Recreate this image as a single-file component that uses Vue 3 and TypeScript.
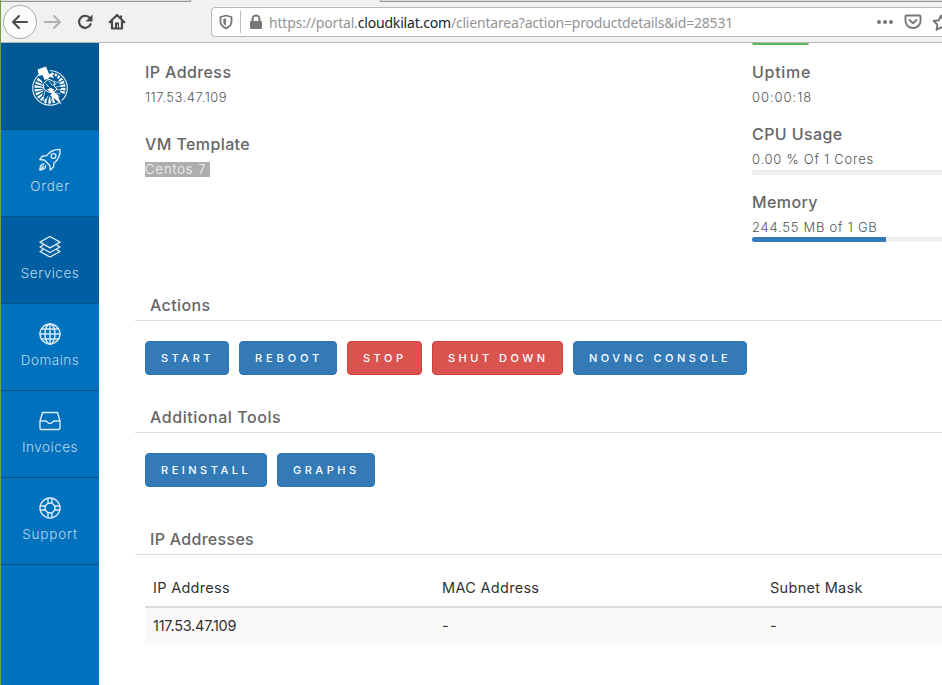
<script setup lang="ts">
interface NavItem {
  label: string
  icon: 'rocket' | 'layers' | 'globe' | 'inbox' | 'lifebuoy'
  active?: boolean
}
interface ActionButton {
  label: string
  key: string
  danger?: boolean
}

const navItems: NavItem[] = [
  { label: 'Order', icon: 'rocket' },
  { label: 'Services', icon: 'layers', active: true },
  { label: 'Domains', icon: 'globe' },
  { label: 'Invoices', icon: 'inbox' },
  { label: 'Support', icon: 'lifebuoy' },
]
const actions: ActionButton[] = [
  { label: 'START', key: 'start' },
  { label: 'REBOOT', key: 'reboot' },
  { label: 'STOP', key: 'stop', danger: true },
  { label: 'SHUT DOWN', key: 'shutdown', danger: true },
  { label: 'NOVNC CONSOLE', key: 'console' },
]
const tools: ActionButton[] = [
  { label: 'REINSTALL', key: 'reinstall' },
  { label: 'GRAPHS', key: 'graphs' },
]
const rays: number[] = [10, 24, 38, 52, 66, 80, 94, 108, 165, 182, 199, 216, 231, 246, 261, 276, 291, 306]
</script>

<template>
  <div class="window">
    <header class="browser">
      <div class="tabs"><i class="tab-left"></i><i class="tab-active"></i><i class="tab-right"></i></div>
      <div class="toolbar">
        <span class="back">
          <svg width="18" height="16" viewBox="0 0 18 16"><path d="M8 2 2 8l6 6M2.500 8H16" /></svg>
        </span>
        <svg class="forward" width="18" height="16" viewBox="0 0 18 16"><path d="m10 2 6 6-6 6M15.500 8H1" /></svg>
        <svg class="reload" width="18" height="18" viewBox="0 0 18 18">
          <path d="M14.600 11.200A6 6 0 1 1 13.800 5" /><path class="solid" d="M16.500 1.500v7h-7z" />
        </svg>
        <svg class="home" width="18" height="18" viewBox="0 0 18 18">
          <path d="M1.700 9.200 9 2l7.300 7.200M4 8v7.500h10V8" /><path class="solid" d="M7 9.500h4V16H7zM12 2.500h2v4l-2-2z" /><path class="hole" d="M9.500 12v2" />
        </svg>
        <div class="urlbar">
          <svg class="shield" width="14" height="16" viewBox="0 0 14 16">
            <path d="M7 1.500 12.500 3v4.500c0 3.300-2.200 5.500-5.500 6.800-3.300-1.300-5.500-3.500-5.500-6.800V3z" /><path class="solid" d="M7 4.300v7.500C5 10.700 4.300 9.400 4.300 7.400V5z" />
          </svg>
          <i class="divider"></i>
          <svg class="lock" width="14" height="16" viewBox="0 0 14 16"><path d="M3.500 8V5a3.500 3.500 0 0 1 7 0v3" /><rect x="1" y="7" width="12" height="8" rx="1.200" /></svg>
          <span class="url">https://portal.<b>cloudkilat.com</b>/clientarea?action=productdetails&amp;id=28531</span>
          <svg class="dots" width="18" height="6" viewBox="0 0 18 6"><circle cx="3" cy="3" r="2" /><circle cx="9" cy="3" r="2" /><circle cx="15" cy="3" r="2" /></svg>
          <svg class="pocket" width="18" height="16" viewBox="0 0 18 16"><path d="M2.500 1.500h13q1 0 1 1V7A7.500 7 0 0 1 1.500 7V2.500q0-1 1-1zM5.500 6 9 9.300 12.500 6" /></svg>
          <svg class="star" width="18" height="17" viewBox="0 0 18 17"><path d="m9 1.500 2.200 4.800 5.200.7-3.800 3.600.9 5.200L9 13.300l-4.500 2.500.9-5.200L1.600 7l5.200-.7z" /></svg>
        </div>
      </div>
    </header>

    <div class="page">
      <nav class="sidebar">
        <div class="logo">
          <svg width="38" height="42" viewBox="0 0 38 42">
            <circle class="ring" cx="19" cy="22" r="17.300" />
            <path v-for="a in rays" :key="a" class="ray" d="m19 19-1.300-12.500h2.600z" :transform="`rotate(${a} 19 22)`" />
            <path class="cut" d="m5 3 11-4 4 9 6 3 2 5 2 6-2 7 4 8-6-2-5-5-6 3-4-3 2-8-2-5 3-5-4-5z" />
            <path class="white" d="m6.500 3.500 8.500-3 3 7.500 2.500-.7 2.500 5-4-1.500-1.500 1.800-4 1.400-2-5-3.500 1z" />
            <path class="fist" d="m13 17 4-3.500 3 .5 4 3-1 3 3 3-4 4-5-1-4-3z" />
            <path class="white" d="m14 16 5 6-3 1.500 5 4-2 2 5 3.500 6.500 5.500-3.500-8 2 .5-7-6 1.500-1.500-7-3z" />
            <path class="line" d="m18 15 3 4 4-1m-2-3 5 2m-3 4 5-1m-5 4 5-.5m-5 3.500 4 1M14 25l-2 8 3 5m2-8-3 6m7-3-3 6" />
          </svg>
        </div>
        <a v-for="item in navItems" :key="item.label" class="nav-item" :class="[{ active: item.active }, item.icon]">
          <svg width="24" height="24" viewBox="0 0 24 24">
            <template v-if="item.icon === 'rocket'">
              <path d="M22 1.500c-6-.3-10 1.800-13.500 6.200L4.500 8 1.800 11.500l4.500.5 5.500 5.500.5 4.500 3.200-3 .5-4C20.500 11.500 22.500 7.500 22 1.500zM6 16c-3 .2-4 2.300-4.200 6 3.600-.1 5.700-1.200 6-4.200M2 22l3.500-3.500" />
              <circle cx="15.500" cy="8" r="2.400" />
            </template>
            <template v-else-if="item.icon === 'layers'">
              <path d="m12 1.500 10 5.700-10 5.600L2 7.200zM4.800 10.300 2 12l10 5.500L22 12l-2.800-1.700M4.800 14.900 2 16.500 12 22l10-5.500-2.800-1.600" />
            </template>
            <template v-else-if="item.icon === 'globe'">
              <circle cx="12" cy="12" r="10" /><ellipse cx="12" cy="12" rx="5" ry="10" /><path d="M12 2v20M2 12h20M3.500 7h17M3.500 17h17" />
            </template>
            <template v-else-if="item.icon === 'inbox'">
              <path d="M4.500 3.500h15L22 12v7q0 1.500-1.500 1.500h-17Q2 20.500 2 19v-7zM2 12h6c1 0 1.500 2.500 4 2.500s3-2.500 4-2.500h6" />
            </template>
            <template v-else>
              <circle cx="12" cy="12" r="10" /><circle cx="12" cy="12" r="5" />
              <path d="M10 2.200v5.200M14 2.200v5.200M10 16.600v5.200M14 16.600v5.200M2.200 10h5.200M2.200 14h5.200M16.600 10h5.200M16.600 14h5.200" />
            </template>
          </svg>
          <span>{{ item.label }}</span>
        </a>
      </nav>

      <main class="content">
        <section class="overview">
          <div class="left">
            <h4 class="t-ip">IP Address</h4>
            <p class="v-ip">117.53.47.109</p>
            <h4 class="t-vm">VM Template</h4>
            <p><mark>Centos 7</mark></p>
          </div>
          <div class="right">
            <div class="status"></div>
            <h4 class="t-up">Uptime</h4>
            <p class="v-up">00:00:18</p>
            <h4 class="t-cpu">CPU Usage</h4>
            <p class="v-cpu">0.00 % Of 1 Cores</p>
            <div class="meter"></div>
            <h4 class="t-mem">Memory</h4>
            <p class="v-mem">244.55 MB of 1 GB</p>
            <div class="meter"><i></i></div>
          </div>
        </section>

        <h3 class="h-actions">Actions</h3>
        <div class="buttons">
          <button v-for="b in actions" :key="b.key" :class="[b.key, { danger: b.danger }]">{{ b.label }}</button>
        </div>
        <h3 class="h-tools">Additional Tools</h3>
        <div class="buttons">
          <button v-for="b in tools" :key="b.key" :class="b.key">{{ b.label }}</button>
        </div>
        <h3 class="h-addresses">IP Addresses</h3>
        <div class="table">
          <div class="row head"><span>IP Address</span><span>MAC Address</span><span>Subnet Mask</span></div>
          <div class="row"><span class="c-num">117.53.47.109</span><span>-</span><span>-</span></div>
        </div>
      </main>
    </div>
  </div>
</template>

<style>
body { margin: 0; overflow: hidden; background: #fff; }
</style>

<style scoped>
* { box-sizing: border-box; }
.window { width: 942px; height: 685px; overflow: hidden; border-left: 1px solid #789b50; font-family: Inter, "Liberation Sans", sans-serif; background: #fff; }
svg { display: block; flex: none; fill: none; stroke-linejoin: round; stroke-linecap: round; }
.browser { height: 43px; background: #f1f1f1; border-bottom: 1px solid #b7b7b7; }
.tabs { display: flex; height: 2px; }
.tab-left { width: 190px; background: #dcdcdc; border-bottom: 1px solid #979797; border-right: 1px solid #979797; }
.tab-active { width: 189px; }
.tab-right { flex: 1; background: #dcdcdc; border-bottom: 1px solid #979797; border-left: 1px solid #979797; }
.toolbar { display: flex; align-items: center; height: 40px; }
.back { flex: none; display: flex; align-items: center; justify-content: center; width: 34px; height: 34px; margin-left: 2px; border: 1px solid #aaa; border-radius: 50%; background: #fcfcfc; stroke: #4a4a4a; stroke-width: 2; }
.forward { margin-left: 7px; stroke: #b0b0b0; stroke-width: 2; }
.reload { margin-left: 14px; stroke: #4a4a4a; stroke-width: 2.2; }
.home { margin-left: 14px; stroke: #4a4a4a; stroke-width: 2.2; }
.reload .solid, .home .solid { fill: #4a4a4a; stroke: none; }
.home .hole { stroke: #ddd; stroke-width: 1; }
.urlbar { flex: none; display: flex; align-items: center; width: 740px; height: 30px; margin-left: 85px; border: 1px solid #b7b7b7; border-radius: 4px; background: #fff; }
.shield { margin-left: 7px; stroke: #777; stroke-width: 1.8; }
.shield .solid { fill: #777; stroke: none; }
.divider { width: 1px; height: 22px; margin: 0 8px 0 7px; background: #bbb; }
.lock { stroke: #777; stroke-width: 2; }
.lock rect { fill: #777; stroke: none; }
.url { flex: none; width: 607px; margin-left: 6px; padding-top: 1px; font: 14px/28px "Noto Sans", sans-serif; letter-spacing: -.18px; color: #949494; white-space: nowrap; }
.url b { color: #222; font-weight: 400; }
.dots { fill: #777; }
.pocket { margin-left: 10px; stroke: #777; stroke-width: 1.9; }
.star { margin-left: 10px; stroke: #777; stroke-width: 1.9; }

.page { display: flex; height: 642px; }
.sidebar { flex: none; width: 98px; background: #0071bd; }
.logo { display: flex; justify-content: center; height: 87px; padding-top: 23px; background: #005993; border-bottom: 1px solid #005389; }
.ring { stroke: #e6f0f7; stroke-width: 1.1; }
.ray, .white { fill: #fff; }
.cut { fill: #005993; }
.fist { fill: #005993; stroke: #fff; stroke-width: 1; }
.line { stroke: #e6f0f7; stroke-width: .8; }
.nav-item { display: flex; flex-direction: column; align-items: center; height: 87px; padding-top: 18px; border-bottom: 1px solid #005389; color: #bcd9ed; font-size: 13.500px; font-weight: 300; line-height: 20px; letter-spacing: .5px; }
.nav-item.active { background: #005fa2; }
.nav-item svg { stroke: #d9eaf6; stroke-width: 1.4; }
.nav-item span { margin-top: 4px; }
.nav-item.rocket, .nav-item.lifebuoy { letter-spacing: .8px; }

.content { flex: 1; min-width: 0; padding-left: 36px; }
.overview { display: flex; height: 243px; padding-left: 10px; }
.left { flex: none; width: 607px; padding-top: 18px; }
.right { flex: 1; min-width: 0; }
h3, h4, p { margin: 0; white-space: nowrap; }
h4 { height: 22px; font-size: 16px; font-weight: 500; line-height: 22px; color: #666; letter-spacing: .4px; }
p { height: 22px; margin-top: 3px; font-size: 13px; font-weight: 300; line-height: 22px; color: #555; letter-spacing: .75px; }
.v-ip { letter-spacing: .5px; }
.t-vm { margin-top: 25px; }
mark { display: inline-block; width: 65px; height: 15px; background: #aeaeae; color: #f7f7f7; line-height: 15px; letter-spacing: .95px; }
.status { width: 57px; height: 2px; border-radius: 0 0 2px 2px; background: #5cb85c; }
.t-up { margin-top: 16px; letter-spacing: .7px; }
.v-up { letter-spacing: .95px; }
.t-cpu { margin-top: 15px; }
.meter { height: 5px; border-radius: 3px 0 0 3px; background: #f1f1f1; box-shadow: inset 0 1px 1px #e6e6e6; overflow: hidden; }
.v-mem { height: 21px; }
.t-mem { margin-top: 16px; }
.meter i { display: block; width: 134px; height: 5px; background: #337ab7; }
h3 { height: 35px; padding-left: 15px; font-size: 16px; font-weight: 500; line-height: 38px; color: #666; letter-spacing: .4px; border-bottom: 1px solid #ddd; }
.h-tools { letter-spacing: .55px; }
.buttons { display: flex; gap: 10px; height: 77px; padding: 20px 0 0 10px; }
button { flex: none; height: 34px; padding: 0 0 0 15px; border: 1px solid #2e75b3; border-radius: 4px; background: #337ab7; color: #fff; font: 500 11px/32px Inter, sans-serif; letter-spacing: 3.500px; text-align: left; white-space: nowrap; }
button.danger { background: #d9534f; border-color: #d43f3a; }
.start { width: 84px; }
.reboot, .graphs { width: 98px; }
.reboot { letter-spacing: 3.900px; }
.stop { width: 75px; }
.shutdown { width: 131px; }
.console { width: 174px; }
.reinstall { width: 122px; }
.h-addresses { margin-top: 10px; letter-spacing: .3px; }
.table { padding: 15px 0 0 10px; font-size: 14.500px; line-height: 36px; color: #333; }
.row { display: grid; grid-template-columns: 289px 328px 1fr; height: 36px; padding-left: 8px; background: #f9f9f9; white-space: nowrap; }
.row.head { height: 38px; background: #fff; border-bottom: 2px solid #ddd; letter-spacing: .3px; }
.c-num { letter-spacing: -.25px; }
</style>
